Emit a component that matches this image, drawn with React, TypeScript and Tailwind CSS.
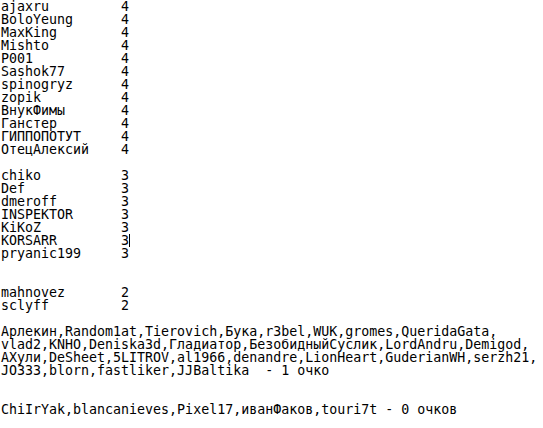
import React from "react";

const g4 = ["ajaxru","BoloYeung","MaxKing","Mishto","P001","Sashok77","spinogryz","zopik","ВнукФимы","Ганстер","ГИППОПОТУТ","ОтецАлексий"];
const g3 = ["chiko","Def","dmeroff","INSPEKTOR","KiKoZ","KORSARR","pryanic199"];
const g2 = ["mahnovez","sclyff"];

function Row({ name, score, cursor }: { name: string; score: string; cursor?: boolean }) {
  return (
    <div className="h-[13px] whitespace-pre">
      {name.padEnd(15, " ")}
      {score}
      {cursor && <span className="inline-block w-[1px] h-[13px] bg-black align-top" />}
    </div>
  );
}

function Line({ children }: { children?: React.ReactNode }) {
  return <div className="h-[13px] whitespace-pre">{children}</div>;
}

export default function App() {
  return (
    <div
      className="w-[543px] h-[428px] bg-white text-black text-[13.3px] leading-[13px] pl-[1px] overflow-hidden"
      style={{ fontFamily: '"DejaVu Sans Mono", "Liberation Mono", monospace' }}
    >
      {g4.map((n) => <Row key={n} name={n} score="4" />)}
      <Line />
      {g3.map((n) => <Row key={n} name={n} score="3" cursor={n === "KORSARR"} />)}
      <Line />
      <Line />
      {g2.map((n) => <Row key={n} name={n} score="2" />)}
      <Line />
      <Line>Арлекин,Random1at,Tierovich,Бука,r3bel,WUK,gromes,QueridaGata,</Line>
      <Line>vlad2,KNHO,Deniska3d,Гладиатор,БезобидныйСуслик,LordAndru,Demigod,</Line>
      <Line>AХули,DeSheet,5LITROV,al1966,denandre,LionHeart,GuderianWH,serzh21,</Line>
      <Line>JO333,blorn,fastliker,JJBaltika  - 1 очко</Line>
      <Line />
      <Line />
      <Line>ChiIrYak,blancanieves,Pixel17,иванФаков,touri7t - 0 очков</Line>
    </div>
  );
}
